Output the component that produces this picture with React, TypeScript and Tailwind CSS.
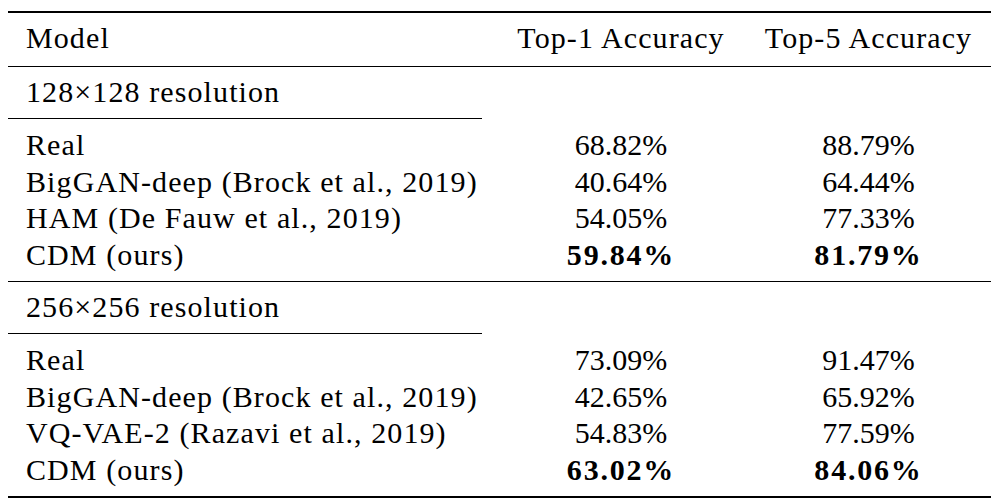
const sections = [
  {
    title: "128×128 resolution",
    rows: [
      { model: "Real", top1: "68.82%", top5: "88.79%", bold: false },
      { model: "BigGAN-deep (Brock et al., 2019)", top1: "40.64%", top5: "64.44%", bold: false },
      { model: "HAM (De Fauw et al., 2019)", top1: "54.05%", top5: "77.33%", bold: false },
      { model: "CDM (ours)", top1: "59.84%", top5: "81.79%", bold: true },
    ],
  },
  {
    title: "256×256 resolution",
    rows: [
      { model: "Real", top1: "73.09%", top5: "91.47%", bold: false },
      { model: "BigGAN-deep (Brock et al., 2019)", top1: "42.65%", top5: "65.92%", bold: false },
      { model: "VQ-VAE-2 (Razavi et al., 2019)", top1: "54.83%", top5: "77.59%", bold: false },
      { model: "CDM (ours)", top1: "63.02%", top5: "84.06%", bold: true },
    ],
  },
];

function Value({ text, bold }: { text: string; bold: boolean }) {
  return (
    <span className={bold ? "font-bold tracking-[1.8px]" : "tracking-normal"}>{text}</span>
  );
}

export default function App() {
  return (
    <div
      className="w-[999px] h-[503px] bg-white text-black pl-[8px] pt-[11px] text-[30px] tracking-[1.1px]"
      style={{ fontFamily: '"Liberation Serif", "Times New Roman", serif' }}
    >
      <div className="w-[983px]">
        {/* top rule */}
        <div className="h-[2px] bg-black" />
        <div className="flex h-[53px] items-center pb-[3px] leading-none">
          <div className="w-[488px] pl-[18px]">Model</div>
          <div className="w-[250px] text-center">Top-1 Accuracy</div>
          <div className="w-[245px] text-center">Top-5 Accuracy</div>
        </div>
        <div className="h-px bg-black" />

        {sections.map((section, i) => (
          <div key={section.title}>
            {i > 0 && <div className="h-px bg-black" />}
            <div className="flex h-[51px] items-center pb-[1px] leading-none">
              <div className="pl-[18px]">{section.title}</div>
            </div>
            <div className="h-px w-[474px] bg-black" />
            <div className="py-[8px]">
              {section.rows.map((row) => (
                <div key={row.model + row.top1} className="flex h-[36.5px] items-center leading-none">
                  <div className="w-[488px] pl-[18px]">{row.model}</div>
                  <div className="w-[250px] text-center">
                    <Value text={row.top1} bold={row.bold} />
                  </div>
                  <div className="w-[245px] text-center">
                    <Value text={row.top5} bold={row.bold} />
                  </div>
                </div>
              ))}
            </div>
          </div>
        ))}
        {/* bottom rule */}
        <div className="h-[2px] bg-black" />
      </div>
    </div>
  );
}
